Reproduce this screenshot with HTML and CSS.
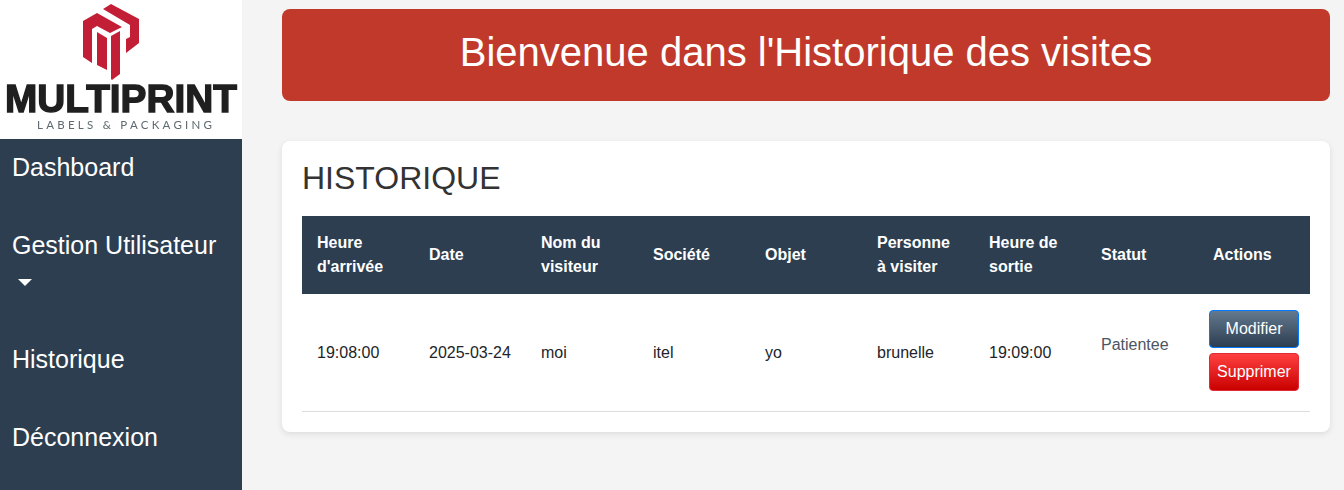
FILE: index.html
```html
<!DOCTYPE html>
<html lang="fr">
<head>
<meta charset="utf-8">
<title>Historique des visites</title>
<link rel="stylesheet" href="styles.css">
</head>
<body>
<div class="layout">
  <aside class="sidebar">
    <div class="logo">
      <svg class="logo-svg" width="242" height="139" viewBox="0 0 242 139">
        <path class="logo-red" d="M103 9 111 4 139 19V43L126 53V39L130 37V25Z"/>
        <path class="logo-red" d="M83 21 97 13 122 27 110 33 97 26 92 29V63L83 57Z"/>
        <path class="logo-red" d="M97 32 107 38V70L97 65Z"/>
        <path class="logo-red" d="M111 36 120 31V74L112 80 111 79Z"/>
        <text class="logo-name" x="5" y="112" textLength="232" lengthAdjust="spacingAndGlyphs">MULTIPRINT</text>
        <text class="logo-tag" x="37" y="129" textLength="175">LABELS &amp; PACKAGING</text>
      </svg>
    </div>
    <nav class="nav">
      <a class="nav-item">Dashboard</a>
      <a class="nav-item">Gestion Utilisateur <span class="caret"></span></a>
      <a class="nav-item">Historique</a>
      <a class="nav-item">Déconnexion</a>
    </nav>
  </aside>
  <main class="main">
    <header class="banner"><h1>Bienvenue dans l'Historique des visites</h1></header>
    <section class="card">
      <h2>HISTORIQUE</h2>
      <table class="table">
        <thead>
          <tr>
            <th>Heure d'arrivée</th><th>Date</th><th>Nom du visiteur</th><th>Société</th><th>Objet</th><th>Personne à visiter</th><th>Heure de sortie</th><th>Statut</th><th>Actions</th>
          </tr>
        </thead>
        <tbody>
          <tr>
            <td>19:08:00</td><td>2025-03-24</td><td>moi</td><td>itel</td><td>yo</td><td>brunelle</td><td>19:09:00</td>
            <td class="status"><span>Patientee</span></td>
            <td class="actions"><button class="btn btn-edit">Modifier</button><button class="btn btn-del">Supprimer</button></td>
          </tr>
        </tbody>
      </table>
    </section>
  </main>
</div>
</body>
</html>
```
FILE: styles.css
```css
* { box-sizing: border-box; }
html, body { margin: 0; height: 100%; }
body { background: #f4f4f4; font-family: "Liberation Sans", Arial, sans-serif; color: #333; overflow: hidden; }
.layout { display: flex; height: 490px; }
.sidebar { width: 242px; flex: none; background: #2c3e50; }
.logo { height: 139px; background: #fff; }
.logo-svg { display: block; filter: blur(.4px); }
.logo-red { fill: #c21f37; }
.logo-name { font: 900 38px "Liberation Sans", Arial, sans-serif; fill: #1f1f1f; stroke: #1f1f1f; stroke-width: 1.4px; }
.logo-tag { font: 400 11.5px "Lato", "Liberation Sans", sans-serif; fill: #5d6a70; }
.nav-item { display: block; color: #fff; font-size: 25px; line-height: 36px; padding: 10px 12px 32px; }
.caret { display: inline-block; width: 0; height: 0; border-left: 7px solid transparent; border-right: 7px solid transparent; border-top: 7px solid #fff; margin-left: 6px; vertical-align: middle; position: relative; top: -1px; }
.main { flex: 1; padding: 9px 14px 0 40px; }
.banner { height: 92px; background: #c0392b; border-radius: 8px; display: flex; align-items: center; justify-content: center; margin-bottom: 40px; padding-bottom: 6px; }
.banner h1 { margin: 0; color: #fff; font-size: 40px; font-weight: 400; }
.card { background: #fff; border-radius: 8px; padding: 20px; height: 291px; box-shadow: 0 2px 6px rgba(0, 0, 0, .1); }
.card h2 { margin: 0 0 20px; font-size: 32px; line-height: 35px; font-weight: 400; color: #333; }
.table { width: 100%; border-collapse: collapse; table-layout: fixed; font-size: 16px; }
.table th { background: #2c3e50; color: #fff; text-align: left; font-weight: 700; padding: 15px; line-height: 24px; height: 78px; }
.table td { padding: 16px 15px 14px; border-bottom: 1px solid #ddd; color: #212529; line-height: 24px; height: 117px; }
.table td.status { color: #4b5563; padding-bottom: 31px; padding-top: 16px; }
.table td.actions { padding: 15px 11px 19px 11px; }
.btn { display: block; width: 90px; height: 38px; margin: 0 auto 5px 0; border-radius: 4px; color: #fff; font: 16px "Liberation Sans", Arial, sans-serif; padding: 0; }
.btn-edit { background: linear-gradient(#64798f, #2c3e50); border: 1px solid #007bff; }
.btn-del { background: linear-gradient(#ff4040, #c90000); border: 1px solid #e02b36; margin-bottom: 0; }
```
